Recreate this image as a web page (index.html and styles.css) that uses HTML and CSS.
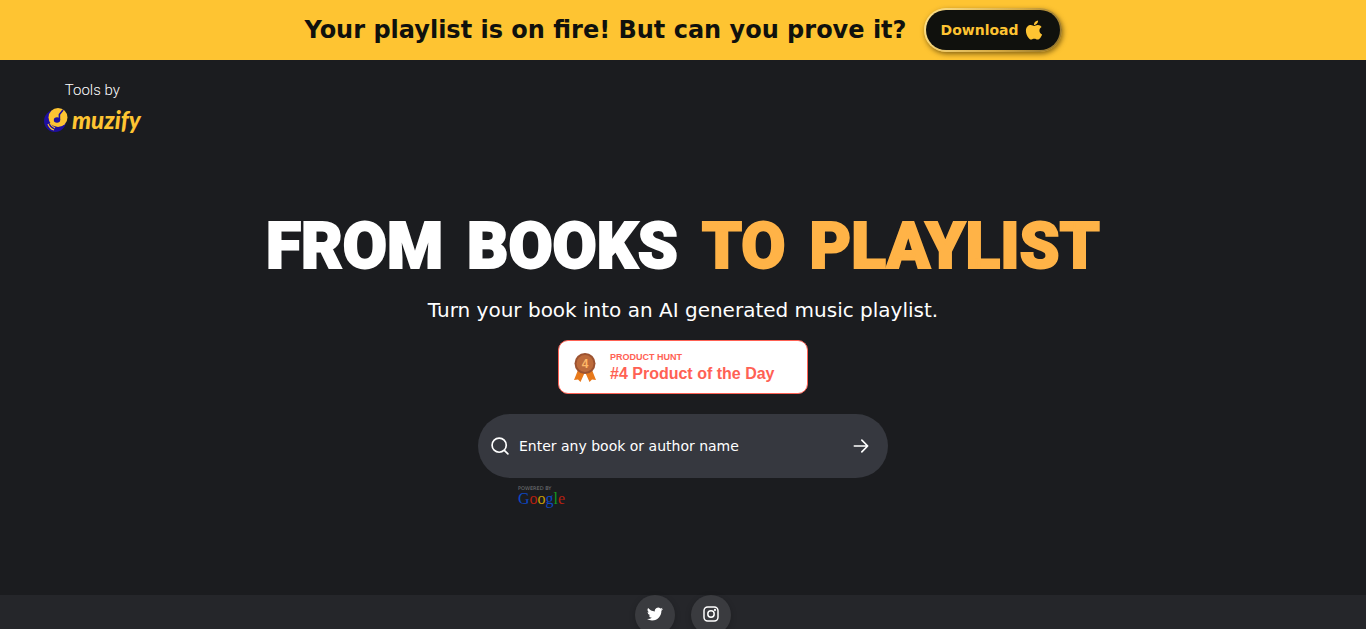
FILE: index.html
```html
<!DOCTYPE html>
<html lang="en">
<head>
<meta charset="utf-8">
<meta name="viewport" content="width=device-width, initial-scale=1">
<title>From Books to Playlist</title>
<link rel="stylesheet" href="styles.css">
</head>
<body>
<aside class="banner">
  <p class="banner-text">Your playlist is on fire! But can you prove it?</p>
  <a class="download" href="#">Download
    <svg class="apple" viewBox="0 0 384 512" aria-hidden="true"><path d="M318.700 268.700c-.2-36.700 16.400-64.400 50-84.800-18.800-26.900-47.200-41.700-84.700-44.600-35.500-2.800-74.300 20.700-88.500 20.700-15 0-49.400-19.700-76.400-19.700C63.300 141.200 4 184.800 4 273.500q0 39.300 14.400 81.200c12.800 36.700 59 126.700 107.200 125.200 25.200-.6 43-17.900 75.800-17.900 31.800 0 48.300 17.900 76.400 17.900 48.600-.7 90.400-82.500 102.600-119.300-65.200-30.700-61.700-90-61.700-91.900zm-56.600-164.200c27.300-32.400 24.800-61.900 24-72.500-24.100 1.400-52 16.400-67.900 34.900-17.500 19.800-27.800 44.300-25.600 71.900 26.100 2 49.900-11.400 69.500-34.300z"/></svg>
  </a>
</aside>
<header class="header">
  <a class="brand" href="#">
    <span class="brand-by">Tools by</span>
    <span class="brand-row">
      <svg class="brand-mark" viewBox="0 0 24 26" aria-hidden="true">
        <circle cx="11" cy="14" r="11" fill="#1e0f9e"/>
        <circle cx="14" cy="10.500" r="9.500" fill="#fec432"/>
        <path d="M4 17c1 3 3 5 6 6M6 16c1 2 3 4 5 5" fill="none" stroke="#fec432" stroke-width="1.200"/>
        <ellipse cx="13" cy="13" rx="3.200" ry="2.800" fill="#1e0f9e"/>
        <path d="M15.400 13V7.500L19 3" fill="none" stroke="#1e0f9e" stroke-width="1.600"/>
      </svg>
      <span class="brand-name">muzify</span>
    </span>
  </a>
</header>
<main class="hero">
  <h1 class="title"><span>FROM</span> <span>BOOKS</span> <span class="accent">TO</span> <span class="accent">PLAYLIST</span></h1>
  <p class="subtitle">Turn your book into an AI generated music playlist.</p>
  <a class="award" href="#">
    <svg class="medal" viewBox="0 0 22 29" aria-hidden="true">
      <path d="M4 17L0 27l4-.5L6.500 29 11 19l4.500 10 2.500-2.500 4 .5-4-10z" fill="#e8791b"/>
      <circle cx="11" cy="10.500" r="10.500" fill="#9c5230"/>
      <circle cx="11" cy="10.500" r="8.500" fill="#bd6b3b"/>
      <text class="medal-number" x="11" y="15" text-anchor="middle">4</text>
    </svg>
    <span class="award-text"><span class="award-label">PRODUCT HUNT</span><span class="award-name">#4 Product of the Day</span></span>
  </a>
  <form class="search">
    <svg class="icon" viewBox="0 0 24 24" aria-hidden="true"><circle cx="11" cy="11" r="8.500"/><path d="M17.500 17.500l4 4"/></svg>
    <input class="search-input" type="text" placeholder="Enter any book or author name" aria-label="Enter any book or author name">
    <button class="search-go" type="submit" aria-label="Search"><svg class="icon" viewBox="0 0 24 24" aria-hidden="true"><path d="M4 12h16M13 5l7 7-7 7"/></svg></button>
  </form>
  <div class="powered">
    <span class="powered-label">POWERED BY</span>
    <span class="google"><span class="blue">G</span><span class="red">o</span><span class="yellow">o</span><span class="blue">g</span><span class="green">l</span><span class="red">e</span></span>
  </div>
</main>
<footer class="footer">
  <a class="social" href="#" aria-label="Twitter"><svg class="social-icon" viewBox="0 0 24 24" aria-hidden="true"><path fill="#fff" d="M23.950 4.570a10 10 0 0 1-2.820.770 4.960 4.960 0 0 0 2.160-2.720c-.950.550-2 .950-3.130 1.180a4.920 4.920 0 0 0-8.380 4.480C7.690 8.090 4.070 6.130 1.640 3.160a4.920 4.920 0 0 0 1.520 6.570 4.900 4.900 0 0 1-2.230-.610v.060a4.920 4.920 0 0 0 3.950 4.830 5 5 0 0 1-2.210.080 4.940 4.940 0 0 0 4.600 3.420A9.870 9.870 0 0 1 0 19.540a14 14 0 0 0 7.550 2.210c9.050 0 14-7.500 14-13.980v-.630a9.900 9.900 0 0 0 2.400-2.570z"/></svg></a>
  <a class="social" href="#" aria-label="Instagram"><svg class="social-icon" viewBox="0 0 24 24" fill="none" stroke="#fff" stroke-width="2.200" aria-hidden="true"><rect x="1.500" y="1.500" width="21" height="21" rx="5.500"/><circle cx="12" cy="12" r="4.800"/><circle cx="18" cy="6" r=".6"/></svg></a>
</footer>
</body>
</html>
```
FILE: styles.css
```css
* { box-sizing: border-box; }
body {
  margin: 0;
  height: 100vh;
  overflow: hidden;
  display: flex;
  flex-direction: column;
  background: #1b1c1f;
  color: #fff;
  font-family: "DejaVu Sans", sans-serif;
}
a { color: inherit; text-decoration: none; }
p, h1 { margin: 0; }
svg { display: block; flex: none; }
.banner {
  flex: none;
  display: flex;
  align-items: center;
  justify-content: center;
  gap: 17px;
  height: 60px;
  background: #fec432;
}
.banner-text { color: #10110d; font-size: 24px; font-weight: 700; }
.download {
  display: flex;
  align-items: center;
  gap: 6px;
  height: 44px;
  padding: 0 17px 0 15px;
  border: 2px solid transparent;
  border-radius: 22px;
  background: linear-gradient(#10110d, #10110d) padding-box, linear-gradient(120deg, #ffe28c, #d5aa43 60%, #8d6f27) border-box;
  box-shadow: 1px 2px 5px rgba(60, 40, 0, .6);
  color: #fec432;
  font-size: 14px;
  font-weight: 700;
}
.apple { width: 18px; height: 22px; fill: #fec432; }
.header { flex: none; padding: 20px 44px 0; }
.brand { display: inline-flex; flex-direction: column; align-items: center; }
.brand-by { font: 300 15px/20px Roboto, sans-serif; }
.brand-row { display: flex; align-items: center; gap: 4px; height: 40px; }
.brand-mark { width: 24px; height: 26px; }
.brand-name { color: #fec432; font: italic 900 24px/36px Lato, sans-serif; }
.hero {
  flex: none;
  display: flex;
  flex-direction: column;
  align-items: center;
  padding-top: 67px;
}
.title {
  display: flex;
  flex-wrap: wrap;
  justify-content: center;
  gap: 0 24px;
  font: 900 64px/80px Roboto, sans-serif;
  -webkit-text-stroke: 2px currentColor;
}
.accent { color: #ffb347; }
.subtitle { margin-top: 9px; font-size: 20px; line-height: 28px; }
.award {
  display: flex;
  align-items: center;
  gap: 14px;
  width: 250px;
  height: 54px;
  margin-top: 16px;
  padding: 0 15px;
  border: 1px solid #ff6154;
  border-radius: 10px;
  background: #fff;
  color: #ff6154;
  font-family: "Liberation Sans", Arial, sans-serif;
  font-weight: 700;
}
.medal { width: 22px; height: 29px; }
.medal-number { fill: #ffb866; font-size: 12px; font-weight: 700; }
.award-text { display: flex; flex-direction: column; }
.award-label { font-size: 9px; line-height: 14px; }
.award-name { font-size: 16px; line-height: 20px; }
.search {
  display: flex;
  align-items: center;
  gap: 8px;
  width: 410px;
  max-width: 100%;
  height: 64px;
  margin-top: 20px;
  padding: 0 17px 0 12px;
  border-radius: 32px;
  background: #36383f;
}
.icon { width: 20px; height: 20px; fill: none; stroke: #fff; stroke-width: 2; stroke-linecap: round; stroke-linejoin: round; }
.search-input {
  flex: 1;
  min-width: 0;
  padding: 0 1px;
  border: 0;
  outline: 0;
  background: none;
  color: #fff;
  font: 14px/20px "DejaVu Sans", sans-serif;
}
.search-input::placeholder { color: #fff; opacity: 1; }
.search-go { padding: 0; border: 0; background: none; }
.powered {
  display: flex;
  flex-direction: column;
  width: 410px;
  max-width: 100%;
  padding: 7px 40px 0;
}
.powered-label { color: #77787a; font: 5px/6px "DejaVu Sans", sans-serif; }
.google { font: 16px/16px "Liberation Serif", serif; }
.blue { color: #0d47c4; }
.red { color: #b5200f; }
.yellow { color: #c49b06; }
.green { color: #129a22; }
.footer {
  flex: 1 0 auto;
  display: flex;
  align-items: flex-start;
  justify-content: center;
  gap: 16px;
  margin-top: 88px;
  background: #25262a;
}
.social {
  display: flex;
  align-items: center;
  justify-content: center;
  width: 40px;
  height: 40px;
  padding-bottom: 2px;
  border-radius: 50%;
  background: #3a3b3f;
  box-shadow: 0 2px 6px rgba(0, 0, 0, .2);
}
.social-icon { width: 16px; height: 16px; }
```
